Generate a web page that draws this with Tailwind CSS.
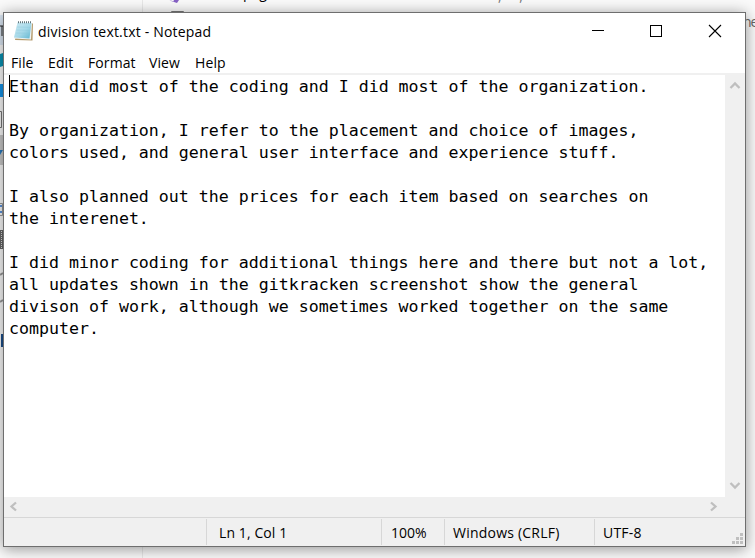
<!DOCTYPE html>
<html lang="en">
<head>
<meta charset="utf-8">
<title>division text.txt - Notepad</title>
<script src="https://cdn.jsdelivr.net/npm/@tailwindcss/browser@4"></script>
</head>
<body class="relative w-[755px] h-[558px] overflow-hidden bg-[#fafafa] text-black font-['Open_Sans','Noto_Sans',sans-serif]">
<!-- desktop content behind the window -->
<svg class="absolute inset-0" width="755" height="558" viewBox="0 0 755 558">
  <rect x="142" y="0" width="1" height="558" fill="#e8e8e8"/>
  <path d="M168 -1l5 3 1-2h5l-2 3-3-1z" fill="#8661c5"/>
  <rect x="171" y="11" width="13" height="3" rx="1" fill="#777"/>
  <rect x="0" y="15" width="3" height="30" fill="#dce8f5"/>
  <path d="M0 26h3M2 26v10" stroke="#222" fill="none"/>
  <path d="M0 54l3-1v13l-3 1z" fill="#0a93b5"/>
  <rect x="0" y="84" width="3" height="13" fill="#1593e8"/>
  <path d="M0 111.500h1.500v16H0" stroke="#777" fill="none"/>
  <rect x="0" y="135" width="3" height="30" fill="#c9c9c9"/>
  <path d="M0 155l3-5H0z" fill="#2878bd"/>
  <path d="M0 203.500h2.500v12H0" stroke="#999" fill="none"/>
  <path d="M0 206h2M0 212h2" stroke="#5c94dd" stroke-width="2"/>
  <rect x="0" y="230" width="3" height="19" fill="#666"/>
  <path d="M1.500 231v17" stroke="#ddd" stroke-dasharray="1 1"/>
  <path d="M0 275l3-2M0 302l3-2" stroke="#999" stroke-width="2"/>
  <path d="M2 334v13" stroke="#1c4f8c" stroke-width="2"/>
</svg>
<div class="absolute left-[243px] top-[-17px] text-[14px] leading-[20px]">page</div>
<div class="absolute left-[498px] top-[-14px] text-[13px] leading-[20px] text-[#777] tracking-[18px]">,,</div>
<div class="absolute left-[743px] top-[12px] text-[14px] leading-[20px] tracking-[-1px] text-[#666]">ne</div>

<!-- window -->
<main class="absolute left-[3px] top-[12px] w-[743px] h-[535px] flex flex-col border border-[#6e6e6e] bg-white shadow-[0_2px_14px_rgba(0,0,0,0.42)]">
  <header class="flex h-[36px] shrink-0 items-center pl-[9px]">
    <svg class="shrink-0" width="21" height="22" viewBox="0 0 21 22">
      <defs><linearGradient id="pg" x1="0" y1="0" x2="1" y2="1"><stop offset="0" stop-color="#cdeaf3"/><stop offset=".55" stop-color="#a5d8e8"/><stop offset="1" stop-color="#5fb6d0"/></linearGradient></defs>
      <path d="M5 3L20 3.500L19.500 20.500L2 20z" fill="#b59b6c"/>
      <path d="M4.500 2.500L19 3L18 19.500L1 18.500z" fill="#eef3f4"/>
      <path d="M4.500 2.500L18.500 3L16.500 18.500L1 17.500z" fill="url(#pg)"/>
      <path d="M4 7l13 .3M3.500 10l13 .3M3 13l13 .3" stroke="#86c4d8" stroke-width=".4"/>
      <path d="M5 2.300h14" stroke="#62767c" stroke-width="2" stroke-dasharray="1 1"/>
    </svg>
    <h1 class="ml-[4px] w-[176px] whitespace-nowrap pt-px text-[14px] leading-[20px] tracking-[0.19px]">division text.txt - Notepad</h1>
    <div class="ml-auto flex h-full items-center">
      <svg width="175" height="36" viewBox="0 0 175 36" fill="none" stroke="#000">
        <path d="M22 17.500h12"/>
        <rect x="80.500" y="12.500" width="11" height="11"/>
        <path d="M139 12l12 12M151 12l-12 12" stroke-width="1.100"/>
      </svg>
    </div>
  </header>
  <nav class="flex h-[24px] shrink-0 items-center pl-[7px] pt-[3px] text-[14px] leading-[20px] whitespace-nowrap tracking-[0.1px]">
    <span class="w-[37px]">File</span><span class="w-[40px]">Edit</span><span class="w-[61px]">Format</span><span class="w-[46px]">View</span><span>Help</span>
  </nav>
  <section class="flex h-[424px] shrink-0 border-t-2 border-[#f0f0f0]">
    <div class="relative w-[721px] bg-white pl-[5px] pt-px">
      <i class="absolute left-[5px] top-[0px] h-[22px] w-px bg-black"></i>
      <pre class="font-['DejaVu_Sans_Mono','Liberation_Mono',monospace] text-[16.600px] leading-[22px]">Ethan did most of the coding and I did most of the organization.

By organization, I refer to the placement and choice of images,
colors used, and general user interface and experience stuff.

I also planned out the prices for each item based on searches on
the interenet.

I did minor coding for additional things here and there but not a lot,
all updates shown in the gitkracken screenshot show the general
divison of work, although we sometimes worked together on the same
computer.</pre>
    </div>
    <div class="flex w-[20px] flex-col items-center justify-between bg-[#f0f0f0] pt-[6px] pb-[7px]">
      <svg width="12" height="9" viewBox="0 0 12 9" fill="none" stroke="#bfbfbf" stroke-width="2.300"><path d="M1.500 7L6 2.500L10.500 7"/></svg>
      <svg width="12" height="9" viewBox="0 0 12 9" fill="none" stroke="#bfbfbf" stroke-width="2.300"><path d="M1.500 2L6 6.500L10.500 2"/></svg>
    </div>
  </section>
  <div class="flex h-[20px] shrink-0 items-center justify-between bg-[#f0f0f0] pl-[5px] pr-[27px]">
    <svg width="9" height="12" viewBox="0 0 9 12" fill="none" stroke="#bfbfbf" stroke-width="2.300"><path d="M7 1.500L2.500 5.500L7 9.500"/></svg>
    <svg width="9" height="12" viewBox="0 0 9 12" fill="none" stroke="#bfbfbf" stroke-width="2.300"><path d="M2 1.500L6.500 5.500L2 9.500"/></svg>
  </div>
  <footer class="relative flex h-[29px] shrink-0 border-t border-[#d7d7d7] bg-[#f0f0f0] pt-px pb-px text-[14px] leading-[27px] whitespace-nowrap">
    <div class="w-[203px] border-r border-[#d7d7d7]"></div>
    <div class="w-[175px] border-r border-[#d7d7d7] pl-[12px] tracking-[0.1px]">Ln 1, Col 1</div>
    <div class="w-[63px] border-r border-[#d7d7d7] pl-[9px]">100%</div>
    <div class="w-[150px] border-r border-[#d7d7d7] pl-[8px] tracking-[0.22px]">Windows (CRLF)</div>
    <div class="pl-[8px] tracking-[0.2px]">UTF-8</div>
    <svg class="absolute right-[2px] bottom-[2px]" width="11" height="11" viewBox="0 0 11 11" fill="#bfbfbf"><path d="M8 0h3v3h-3zM4 4h3v3h-3zM8 4h3v3h-3zM0 8h3v3h-3zM4 8h3v3h-3zM8 8h3v3h-3z"/></svg>
  </footer>
</main>
</body>
</html>
